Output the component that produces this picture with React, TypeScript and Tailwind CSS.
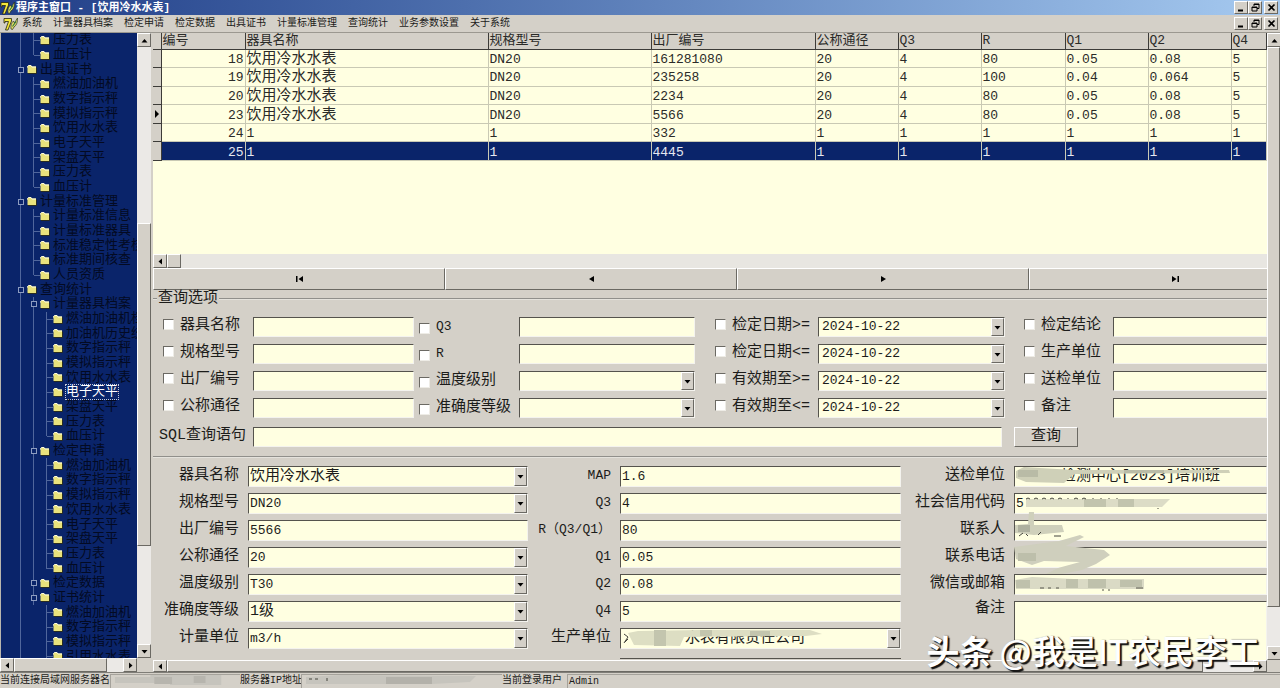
import { Fragment, type ReactNode } from "react";
import clsx from "clsx";

const raised = "border border-t-white border-l-white border-r-[#6b6963] border-b-[#6b6963] bg-[#d4d0c8]";
const sunken = "border border-t-[#55534d] border-l-[#55534d] border-r-[#f4f3ee] border-b-[#f4f3ee] bg-[#ffffe1]";

const menus = ["系统", "计量器具档案", "检定申请", "检定数据", "出具证书", "计量标准管理", "查询统计", "业务参数设置", "关于系统"];

// b = expandable box, t = branch, e = last branch, l = line passing by, n = nothing
const tree: [string, string][] = [
  ["lt", "压力表"],
  ["le", "血压计"],
  ["b", "出具证书"],
  ["lt", "燃油加油机"],
  ["lt", "数字指示秤"],
  ["lt", "模拟指示秤"],
  ["lt", "饮用水水表"],
  ["lt", "电子天平"],
  ["lt", "架盘天平"],
  ["lt", "压力表"],
  ["le", "血压计"],
  ["b", "计量标准管理"],
  ["lt", "计量标准信息"],
  ["lt", "计量标准器具"],
  ["lt", "标准稳定性考核"],
  ["lt", "标准期间核查"],
  ["le", "人员资质"],
  ["b", "查询统计"],
  ["lb", "计量器具档案"],
  ["llt", "燃油加油机档案"],
  ["llt", "加油机历史统计"],
  ["llt", "数字指示秤"],
  ["llt", "模拟指示秤"],
  ["llt", "饮用水水表"],
  ["llt", "电子天平"],
  ["llt", "架盘天平"],
  ["llt", "压力表"],
  ["lle", "血压计"],
  ["lb", "检定申请"],
  ["llt", "燃油加油机"],
  ["llt", "数字指示秤"],
  ["llt", "模拟指示秤"],
  ["llt", "饮用水水表"],
  ["llt", "电子天平"],
  ["llt", "架盘天平"],
  ["llt", "压力表"],
  ["lle", "血压计"],
  ["lb", "检定数据"],
  ["lb", "证书统计"],
  ["lnt", "燃油加油机"],
  ["lnt", "数字指示秤"],
  ["lnt", "模拟指示秤"],
  ["lnt", "引用水水表"],
];
const selectedNode = 24;

const columns = ["编号", "器具名称", "规格型号", "出厂编号", "公称通径", "Q3", "R", "Q1", "Q2", "Q4"];
const records = [
  ["18", "饮用冷水水表", "DN20", "161281080", "20", "4", "80", "0.05", "0.08", "5"],
  ["19", "饮用冷水水表", "DN20", "235258", "20", "4", "100", "0.04", "0.064", "5"],
  ["20", "饮用冷水水表", "DN20", "2234", "20", "4", "80", "0.05", "0.08", "5"],
  ["23", "饮用冷水水表", "DN20", "5566", "20", "4", "80", "0.05", "0.08", "5"],
  ["24", "1", "1", "332", "1", "1", "1", "1", "1", "1"],
  ["25", "1", "1", "4445", "1", "1", "1", "1", "1", "1"],
];

type Kind = "text" | "select" | "date";
const filters: [string, Kind][][] = [
  [["器具名称", "text"], ["Q3", "text"], ["检定日期>=", "date"], ["检定结论", "text"]],
  [["规格型号", "text"], ["R", "text"], ["检定日期<=", "date"], ["生产单位", "text"]],
  [["出厂编号", "text"], ["温度级别", "select"], ["有效期至>=", "date"], ["送检单位", "text"]],
  [["公称通径", "text"], ["准确度等级", "select"], ["有效期至<=", "date"], ["备注", "text"]],
];

// Latin text runs at half the width of the Chinese characters
const textSize = (value: string) => (/[\u3000-\u9fff]/.test(value) ? "text-[15px]" : "text-[13px]");

const Arrow = ({ dir }: { dir: "up" | "down" | "left" | "right" }) => (
  <svg width="7" height="7" viewBox="0 0 7 7" aria-hidden="true">
    {dir === "up" && <path d="M0.5 5.5 3.5 2 6.5 5.5Z" />}
    {dir === "down" && <path d="M0.5 2 6.5 2 3.5 5.5Z" />}
    {dir === "left" && <path d="M5 0.5 5 6.5 1.5 3.5Z" />}
    {dir === "right" && <path d="M2 0.5 2 6.5 5.5 3.5Z" />}
  </svg>
);

const ScrollButton = ({ dir }: { dir: "up" | "down" | "left" | "right" }) => (
  <button type="button" aria-label={`scroll ${dir}`} className={clsx(raised, "flex size-[14px] max-h-full shrink-0 items-center justify-center")}>
    <Arrow dir={dir} />
  </button>
);

const DelphiIcon = () => (
  <svg width="16" height="14" viewBox="0 0 16 14" aria-hidden="true">
    <path d="M1 1.500H8.500V4L5 13H2.500L5.500 4.500H2V6H1Z" fill="#f4e73c" stroke="#23240f" strokeWidth="0.8" />
    <path d="M8 12C7.500 8 8.500 6 10.500 4l1 2 3-5c0 4-0.500 7-3.500 9l-1.500 2.500Z" fill="#e5dc6a" stroke="#26351c" strokeWidth="0.7" />
    <path d="M9.500 9.500 13 4.500" stroke="#2d7b3a" strokeWidth="1.200" />
  </svg>
);

const WindowButtons = () => (
  <div className="ml-auto flex">
    <button type="button" aria-label="最小化" className={clsx(raised, "flex h-[13px] w-[14px] items-center justify-center")}>
      <svg width="9" height="9" viewBox="0 0 9 9"><path d="M1 7.500H6" stroke="#000" strokeWidth="2" /></svg>
    </button>
    <button type="button" aria-label="还原" className={clsx(raised, "flex h-[13px] w-[14px] items-center justify-center")}>
      <svg width="9" height="9" viewBox="0 0 9 9" fill="none" stroke="#000">
        <path d="M3 3V1H8V5.500H6M3 1.500H8" />
        <path d="M1 4H6V8H1ZM1 4.500H6" />
      </svg>
    </button>
    <button type="button" aria-label="关闭" className={clsx(raised, "ml-0.5 flex h-[13px] w-[14px] items-center justify-center")}>
      <svg width="9" height="9" viewBox="0 0 9 9"><path d="M1.500 1.500 7.500 7.500M7.500 1.500 1.500 7.500" stroke="#000" strokeWidth="1.700" /></svg>
    </button>
  </div>
);

const Guide = ({ type }: { type: string }) => {
  if (type === "b") {
    return (
      <span className="flex w-[13px] shrink-0 flex-col items-center">
        <span className="w-px flex-1 bg-[#50669c]" />
        <span className="size-[6px] border border-[#8d9cc0]" />
        <span className="w-px flex-1 bg-[#50669c]" />
      </span>
    );
  }
  return (
    <span className="flex w-[13px] shrink-0 pl-[6px]">
      {type !== "n" && <span className={clsx("w-px bg-[#50669c]", type === "e" ? "h-1/2" : "h-full")} />}
      {(type === "t" || type === "e") && <span className="h-px flex-1 self-center bg-[#50669c]" />}
    </span>
  );
};

const Folder = () => (
  <svg width="10" height="9" viewBox="0 0 10 9" className="shrink-0 self-center" aria-hidden="true">
    <path d="M0.500 1.500 1.500 0.500H4L5 1.500H9V8H0.500Z" fill="#e9e27c" />
    <path d="M0.500 2.500V1.500L1.500 0.500H4L5 2H9" fill="none" stroke="#fdfbe0" />
    <path d="M1 8.500H9.500V2.500" fill="none" stroke="#2a2c20" />
  </svg>
);

const Sidebar = () => (
  <aside className="flex w-[151px] shrink-0 flex-col">
    <div className="flex min-h-0 flex-1">
      <nav className="flex w-[137px] flex-col overflow-hidden border-l border-[#b9b6ae] bg-[#0a246a] pl-[13px]">
        {/* the last row runs on below the edge of the pane */}
        <ul className="-mb-[6px] flex flex-1 flex-col">
          {tree.map(([guides, name], index) => (
            <li key={index} className="flex min-h-0 flex-1 whitespace-nowrap text-[13px] leading-[14px] text-[#030a22]">
              {guides.split("").map((type, i) => (
                <Guide key={i} type={type} />
              ))}
              <Folder />
              <a
                href="#"
                className={clsx(
                  "ml-[3px] self-center",
                  index === selectedNode && "outline outline-dotted outline-[#c5cbdc] text-white"
                )}
              >
                {name}
              </a>
            </li>
          ))}
        </ul>
      </nav>
      <div className="flex w-[14px] flex-col bg-[#ebe9e6]">
        <ScrollButton dir="up" />
        <div className="flex-[177]" />
        <div className={clsx(raised, "flex-[322]")} />
        <div className="flex-[99]" />
        <ScrollButton dir="down" />
      </div>
    </div>
    <div className="flex h-[14px] w-[137px] bg-[#ebe9e6]">
      <ScrollButton dir="left" />
      <div className={clsx(raised, "w-[93px]")} />
      <div className="flex-1" />
      <ScrollButton dir="right" />
    </div>
  </aside>
);

const DataGrid = () => (
  <div className="min-h-[160px] flex-1 overflow-hidden bg-[#ffffe1]">
    <table className="h-[128px] w-full table-fixed border-collapse whitespace-nowrap">
      <colgroup>
        <col className="w-[8px]" />
        <col className="w-[84px]" />
        <col className="w-[243px]" />
        <col className="w-[163px]" />
        <col className="w-[164px]" />
        <col className="w-[83px]" />
        <col className="w-[83px]" />
        <col className="w-[84px]" />
        <col className="w-[83px]" />
        <col className="w-[83px]" />
        <col />
      </colgroup>
      <thead>
        <tr className="h-[16px] bg-[#d4d0c8] text-left text-[13px] leading-[14px] text-[#2b2b28]">
          <th className="border-r border-b border-[#3c3b38] p-0" />
          {columns.map(name => (
            <th key={name} className="border-r border-b border-[#3c3b38] py-0 pr-0 pl-px font-normal">{name}</th>
          ))}
        </tr>
      </thead>
      <tbody>
        {records.map((record, row) => (
          <tr key={record[0]} className={clsx("leading-[15px]", row === 5 ? "bg-[#0a246a] text-[#e6e8f0]" : "text-[#2b2b28]")}>
            <td className="border-r border-b border-[#3c3b38] bg-[#d4d0c8] p-0">
              {row === 3 && <svg width="6" height="8" viewBox="0 0 6 8" className="mx-auto"><path d="M1 0 5 4 1 8Z" /></svg>}
            </td>
            {record.map((value, i) => (
              <td
                key={i}
                className={clsx("border-r border-b border-[#c9c9b4] px-px pt-0.5 pb-0", i === 0 && "text-right", textSize(value))}
              >
                {value}
              </td>
            ))}
          </tr>
        ))}
      </tbody>
    </table>
  </div>
);

const Navigator = () => (
  <div className="-mr-[54px] grid h-[22px] shrink-0 grid-cols-4">
    {["首记录", "上一条", "下一条", "末记录"].map((name, i) => (
      <button key={name} type="button" aria-label={name} className={clsx(raised, "flex items-center justify-center")}>
        {i === 0 && <svg width="7" height="6" viewBox="0 0 7 6"><path d="M0 0H1.500V6H0ZM7 0V6L2.500 3Z" /></svg>}
        {i === 1 && <svg width="7" height="6" viewBox="0 0 7 6"><path d="M6 0V6L1 3Z" /></svg>}
        {i === 2 && <svg width="7" height="6" viewBox="0 0 7 6"><path d="M1 0V6L6 3Z" /></svg>}
        {i === 3 && <svg width="7" height="6" viewBox="0 0 7 6"><path d="M0 0V6L4.500 3ZM5.500 0H7V6H5.500Z" /></svg>}
      </button>
    ))}
  </div>
);

interface FieldProps {
  id: string;
  kind: Kind;
  value?: string;
  label?: string;
  children?: ReactNode;
}

const Field = ({ id, kind, value = "", label, children }: FieldProps) => (
  <div className={clsx(sunken, "relative flex min-w-0")}>
    {kind === "select" ? (
      <select id={id} aria-label={label} defaultValue={value} className={clsx("min-w-0 flex-1 appearance-none leading-[18px] outline-none", children ? "pl-16" : "pl-px", textSize(value))}>
        <option>{value}</option>
      </select>
    ) : (
      <input id={id} aria-label={label} type="text" defaultValue={value} className={clsx("w-full min-w-0 flex-1 leading-[18px] outline-none", kind === "date" ? "pl-[3px]" : "pl-px", textSize(value))} />
    )}
    {kind === "date" && (
      <button type="button" aria-label="选择日期" className={clsx(raised, "flex w-[13px] items-center justify-center")}>
        <Arrow dir="down" />
      </button>
    )}
    {kind === "select" && (
      <span className={clsx(raised, "pointer-events-none flex w-[13px] items-center justify-center")}>
        <Arrow dir="down" />
      </span>
    )}
    {children}
  </div>
);

const labelPads = ["", "pl-[5px]", "pl-5", "pl-[19px]"];

const QueryOptions = () => (
  <fieldset className="shrink-0 border-y-2 border-[#e4e2dc] [border-style:groove] border-x-0 pb-[9px]">
    <legend className="ml-1 px-px text-[15px] leading-[18px]">查询选项</legend>
    <div className="grid auto-rows-[20px] grid-cols-[90px_161fr_105px_176fr_123px_187fr_108px_154fr] gap-y-[7px] pt-[9px] pl-[10px]">
      {filters.map((line, row) =>
        line.map(([name, kind], col) => (
          <Fragment key={name}>
            <label className={clsx("flex gap-[6px] whitespace-nowrap leading-[18px]", labelPads[col], col === 1 && "items-center", textSize(name))}>
              <input type="checkbox" className="mt-0.5 size-[11px] shrink-0 appearance-none border border-t-[#6b6963] border-l-[#6b6963] border-r-[#eeece6] border-b-[#eeece6] bg-white" />
              {name}
            </label>
            <Field id={`filter-${row}-${col}`} kind={kind} label={name} value={kind === "date" ? "2024-10-22" : ""} />
          </Fragment>
        ))
      )}
    </div>
    <div className="mt-[9px] grid h-5 grid-cols-[90px_161fr_105px_176fr_123px_187fr_108px_154fr] pl-[10px]">
      <label htmlFor="sql" className="-ml-1 whitespace-nowrap text-[15px] leading-[18px]">SQL查询语句</label>
      <div className="col-span-5 grid pr-[3px]">
        <Field id="sql" kind="text" />
      </div>
      <button type="button" className={clsx(raised, "ml-[9px] w-16 text-[15px] leading-[18px]")}>查询</button>
    </div>
  </fieldset>
);

const Smear = ({ children }: { children: ReactNode }) => (
  <svg width="240" height="20" viewBox="0 0 240 20" className="pointer-events-none absolute -top-px -left-px overflow-visible" aria-hidden="true">
    {children}
  </svg>
);

const details: [string, Kind, string][][] = [
  [["器具名称", "select", "饮用冷水水表"], ["MAP", "text", "1.6"], ["送检单位", "text", "　　　检测中心[2023]培训班"]],
  [["规格型号", "select", "DN20"], ["Q3", "text", "4"], ["社会信用代码", "text", "5"]],
  [["出厂编号", "text", "5566"], ["R（Q3/Q1）", "text", "80"], ["联系人", "text", ""]],
  [["公称通径", "select", "20"], ["Q1", "text", "0.05"], ["联系电话", "text", ""]],
  [["温度级别", "select", "T30"], ["Q2", "text", "0.08"], ["微信或邮箱", "text", ""]],
  [["准确度等级", "select", "1级"], ["Q4", "text", "5"]],
  [["计量单位", "select", "m3/h"], ["生产单位", "select", "水表有限责任公司"]],
];

const smears: Record<string, ReactNode> = {
  送检单位: (
    <Smear>
      <path d="M2 5 10 1 26 2 60 4 215 4 216 7 60 8 50 17 12 16 2 12Z" fill="#cfd0b8" />
      <path d="M4 4H24V11H4ZM110 4H150V7H110Z" fill="#b9bba6" />
    </Smear>
  ),
  社会信用代码: (
    <Smear>
      <path d="M12 6H156L148 14H12Z" fill="#dcdcc6" />
      <path d="M70 6H92V14H70ZM104 6H120V14H104Z" fill="#c2c4ae" />
      <path d="M12 6q2-2 4 0M20 6q2-2 4 0M28 6q2-2 4 0M36 6q2-2 4 0M44 6q2-2 4 0M54 5v1M60 6q2-2 4 0M68 6q2-2 4 0M79 5v1M87 5v1M95 5v1M103 5v1M144 15v1" stroke="#44443c" fill="none" />
    </Smear>
  ),
  联系人: (
    <Smear>
      <path d="M1 5 14 4 15-8H20V5L48 5 50 12 20 15 1 13Z" fill="#cfd0bb" />
      <path d="M4 5H16V12H4Z" fill="#aeb09e" />
      <path d="M5 16 9 13M14 16 12 14M24 15 27 12M40 16H47" stroke="#44443c" />
    </Smear>
  ),
  联系电话: (
    <Smear>
      <path d="M0 0 45-6 66-12 70-10 52-1 90 3 96 8 82 17 68 23 22 32 44 21 66 15 30 14 18 18 2 12Z" fill="#cfcfbd" />
      <path d="M4 6H22V14H4Z" fill="#bdbfab" />
    </Smear>
  ),
  微信或邮箱: (
    <Smear>
      <path d="M1 6 18 3 60 5H130V15H2Z" fill="#dadac5" />
      <path d="M2 6H16V14H2ZM52 5H64V14H52ZM74 5H92V14H74ZM106 6H128V13H106Z" fill="#bfc1ac" />
      <path d="M26 14h4M34 14h3M42 14h3M88 16h2M94 16h2M122 14h7" stroke="#55554a" />
    </Smear>
  ),
  生产单位: (
    <Smear>
      <path d="M8 5 18 3 80 2 190 2 202 6 186 8 64 9 60 18 14 17Z" fill="#dddec3" />
      <path d="M34 2H46V18H34ZM80 2H92V8H80ZM130 3H150V8H130Z" fill="#c3c5ae" />
      <path d="M4 6 8 9 4 15M8 11 5 14" stroke="#44443c" fill="none" />
    </Smear>
  ),
};

const Details = () => (
  <div className="grid h-[202px] shrink-0 auto-rows-[21px] grid-cols-[95px_280fr_92px_281fr_113px_253fr] gap-y-[6px] overflow-hidden pt-2">
    {details.map((line, row) => (
      <Fragment key={row}>
        {line.map(([name, kind, value], col) => (
          <Fragment key={name}>
            <label htmlFor={`detail-${row}-${col}`} className={clsx("pr-[9px] text-right whitespace-nowrap leading-5", name.startsWith("R") ? "text-[13px]" : textSize(name))}>
              {name}
            </label>
            <Field id={`detail-${row}-${col}`} kind={kind} value={value}>{smears[name]}</Field>
          </Fragment>
        ))}
        {row === 5 && (
          <>
            <label htmlFor="remark" className="row-span-3 pr-[9px] text-right text-[15px] leading-none">备注</label>
            <textarea id="remark" className={clsx(sunken, "row-span-3 resize-none outline-none")} />
          </>
        )}
      </Fragment>
    ))}
    <div className="col-start-4 mt-[3px] border-t border-[#55534d]" />
  </div>
);

const StatusBar = () => (
  <footer className="flex h-4 shrink-0 items-stretch overflow-hidden border-t border-[#807e78] bg-[#d4d0c8] pt-px text-[10px] leading-[14px] whitespace-nowrap">
    <span className="w-[110px] overflow-hidden">当前连接局域网服务器名</span>
    <span className="w-[130px] border-t border-l border-[#a5a29b]">
      <svg width="128" height="12" viewBox="0 0 130 12"><path d="M4 2H40V0H112V10H60V8H4Z" fill="#c6c4bd" /><path d="M44 2H62V9H44ZM84 1H96V8H84Z" fill="#b7b5ae" /></svg>
    </span>
    <span className="w-[61px] overflow-hidden">服务器IP地址</span>
    <span className="w-[201px] border-t border-l border-[#a5a29b]">
      <svg width="190" height="12" viewBox="0 0 190 12"><path d="M4 2 40 0 174 1 168 7 130 9 4 9Z" fill="#c6c4bd" /><path d="M84 2H130V9H84Z" fill="#b3b1aa" /><path d="M7 4h3M13 4h3M25 3v3" stroke="#44443c" /></svg>
    </span>
    <span className="w-[65px]">当前登录用户</span>
    <span className="flex-1 border-t border-l border-[#a5a29b] pl-px leading-[13px]">Admin</span>
  </footer>
);

const App = () => (
  <div className="relative flex h-screen flex-col overflow-hidden bg-[#d4d0c8] font-['Liberation_Mono','Noto_Sans_CJK_SC',monospace] text-[#1c1c1a]">
    <header className="shrink-0">
      <div className="flex h-[15px] items-center bg-linear-to-r from-[#213d87] to-[#a6caf0] pr-0.5">
        <DelphiIcon />
        <h1 className="whitespace-pre text-[11px] leading-[14px] font-bold text-white">程序主窗口 - [饮用冷水水表]</h1>
        <WindowButtons />
      </div>
      <div className="flex h-[18px] items-center border-b border-[#9b9890] pr-0.5 pl-[3px]">
        <DelphiIcon />
        <nav className="ml-[3px] flex gap-[11px] text-[10px] leading-[14px] whitespace-nowrap">
          {menus.map(menu => (
            <a key={menu} href="#">{menu}</a>
          ))}
        </nav>
        <WindowButtons />
      </div>
    </header>

    <div className="flex min-h-0 flex-1">
      <Sidebar />

      <main className="ml-0.5 flex min-w-0 flex-1 flex-col">
        <div className="flex min-h-0 flex-1">
          <div className="flex min-w-0 flex-1 flex-col overflow-hidden">
            <DataGrid />
            <div className="flex h-[14px] shrink-0 bg-[#e8e6e1]">
              <ScrollButton dir="left" />
              <div className={clsx(raised, "w-[14px]")} />
            </div>
            <Navigator />
            <QueryOptions />
            <Details />
          </div>
          <div className="flex w-[13px] flex-col bg-[#ebe9e6]">
            <ScrollButton dir="up" />
            <div className={clsx(raised, "flex-[562]")} />
            <div className="flex-[39]" />
            <ScrollButton dir="down" />
          </div>
        </div>
        <div className="mr-[13px] flex h-3 shrink-0 bg-[#ebe9e6]">
          <ScrollButton dir="left" />
          <div className={clsx(raised, "flex-[1036]")} />
          <div className="flex-[50]" />
          <ScrollButton dir="right" />
        </div>
      </main>
    </div>

    <StatusBar />

    <div className="pointer-events-none absolute right-[20px] bottom-[18px] flex gap-[7px] font-['Noto_Sans_CJK_SC',sans-serif] text-[33px] leading-10 whitespace-nowrap text-white [text-shadow:2px_2px_1px_#111,1px_0_1px_#333]">
      <span className="font-bold">头条</span>
      <span className="font-medium">@我是IT农民李工</span>
    </div>
  </div>
);

export default App;
